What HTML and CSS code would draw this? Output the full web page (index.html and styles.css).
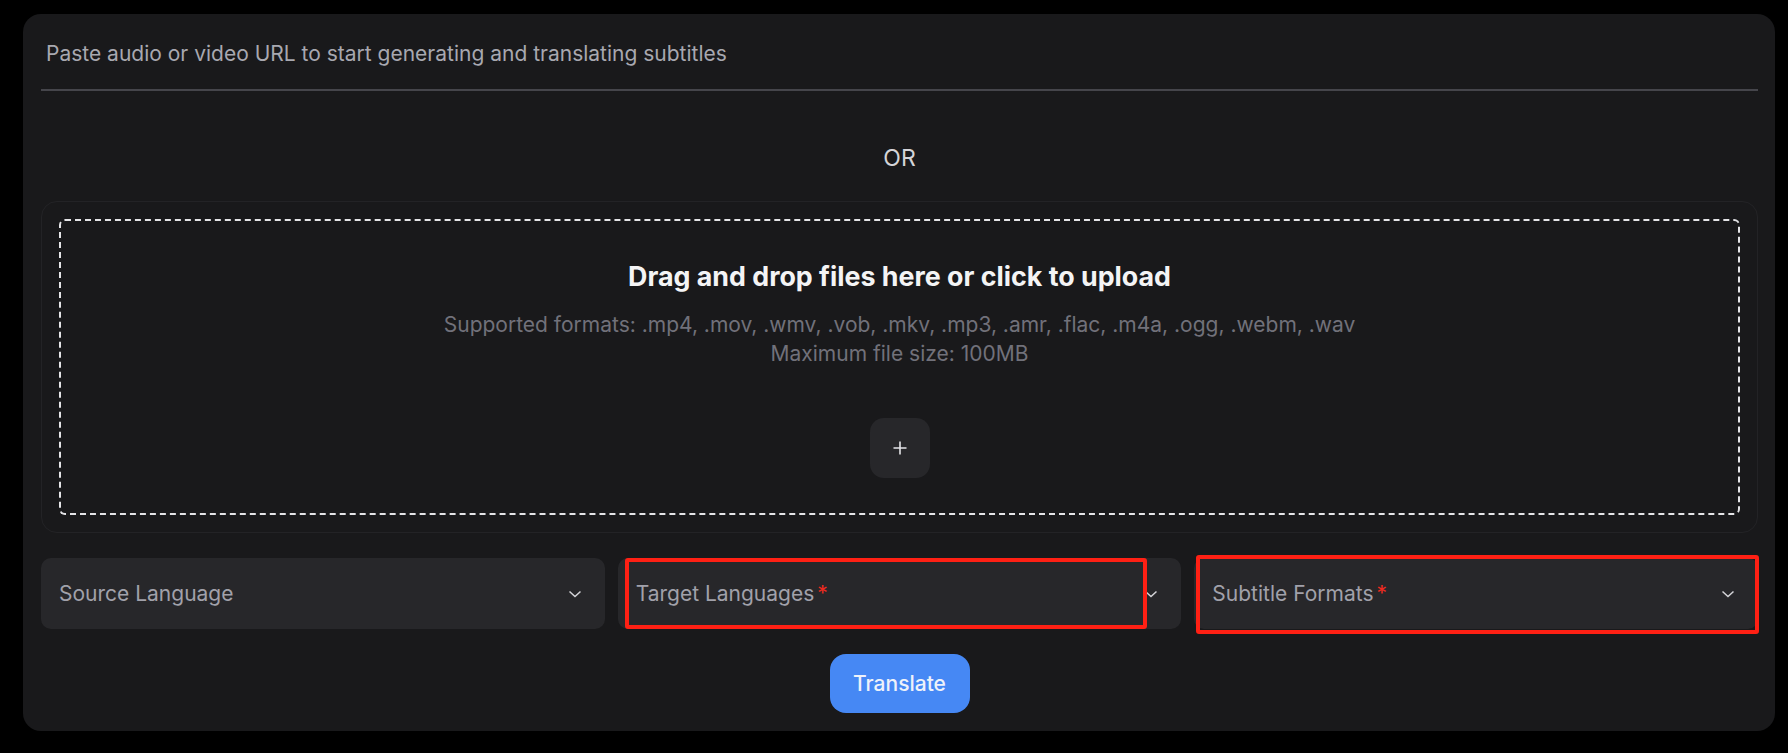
FILE: index.html
```html
<!DOCTYPE html>
<html lang="en">
<head>
<meta charset="utf-8">
<title>Subtitles</title>
<link rel="stylesheet" href="styles.css">
</head>
<body>
<main class="card">
  <div class="url-input">Paste audio or video URL to start generating and translating subtitles</div>
  <div class="or">OR</div>
  <section class="upload">
    <div class="dropzone">
      <h2 class="drop-title">Drag and drop files here or click to upload</h2>
      <p class="drop-note">Supported formats: .mp4, .mov, .wmv, .vob, .mkv, .mp3, .amr, .flac, .m4a, .ogg, .webm, .wav</p>
      <p class="drop-note">Maximum file size: 100MB</p>
      <div class="plus-btn">
        <svg width="16" height="16" viewBox="0 0 16 16"><path d="M8 1.5v13M1.5 8h13" stroke="#e4e4e7" stroke-width="1.6" fill="none"/></svg>
      </div>
    </div>
  </section>
  <div class="selects">
    <div class="select">
      <span class="label">Source Language</span>
      <svg class="chev" width="14" height="8" viewBox="0 0 14 8"><path d="M1.5 1.5l5.5 5 5.5-5" stroke="#d4d4d8" stroke-width="1.5" fill="none"/></svg>
    </div>
    <div class="select">
      <span class="label">Target Languages<span class="req">*</span></span>
      <svg class="chev" width="14" height="8" viewBox="0 0 14 8"><path d="M1.5 1.5l5.5 5 5.5-5" stroke="#d4d4d8" stroke-width="1.5" fill="none"/></svg>
      <div class="mark mark-target"></div>
    </div>
    <div class="select">
      <span class="label">Subtitle Formats<span class="req">*</span></span>
      <svg class="chev" width="14" height="8" viewBox="0 0 14 8"><path d="M1.5 1.5l5.5 5 5.5-5" stroke="#d4d4d8" stroke-width="1.5" fill="none"/></svg>
      <div class="mark mark-formats"></div>
    </div>
  </div>
  <div class="actions">
    <button class="translate">Translate</button>
  </div>
</main>
</body>
</html>
```
FILE: styles.css
```css
* { box-sizing: border-box; }
html, body { margin: 0; padding: 0; background: #000; }
body {
  font-family: Inter, "Noto Sans", sans-serif;
  padding: 14px 13px 22px 23px;
}
.card {
  background: #19191b;
  border-radius: 18px;
  padding: 18px 17px 18px 18px;
  width: 1752px;
  height: 717px;
}
.url-input {
  height: 59px;
  padding: 8px 5px 0 5px;
  line-height: 27px;
  font-size: 21px;
  color: #a8a8b0;
  border-bottom: 2px solid #45454b;
}
.or {
  margin: 54px 0 29px;
  text-align: center;
  font-size: 23px;
  line-height: 27px;
  color: #d4d4d8;
}
.upload {
  border: 1px solid #232326;
  border-radius: 16px;
  padding: 17px;
  height: 332px;
}
.dropzone {
  border: 2px dashed #e4e4e7;
  border-radius: 6px;
  height: 296px;
  padding-top: 39px;
  display: flex;
  flex-direction: column;
  align-items: center;
}
.drop-title {
  margin: 0 0 18px;
  font-size: 26.8px;
  line-height: 32px;
  font-weight: 700;
  color: #f4f4f5;
}
.drop-note {
  margin: 0;
  font-size: 21px;
  line-height: 29px;
  color: #71717a;
}
.plus-btn {
  margin-top: 50px;
  width: 60px;
  height: 60px;
  border-radius: 14px;
  background: #27272a;
  display: flex;
  align-items: center;
  justify-content: center;
}
.selects {
  margin-top: 25px;
  display: grid;
  grid-template-columns: 1fr 1fr 1fr;
  gap: 13px;
}
.select {
  position: relative;
  height: 71px;
  background: #27272a;
  border-radius: 10px;
  display: flex;
  align-items: center;
  justify-content: space-between;
  padding: 0 23px 0 18px;
}
.label {
  font-size: 21px;
  color: #a1a1aa;
}
.req {
  color: #ef2a1f;
  margin-left: 3px;
}
.chev { display: block; }
.mark {
  position: absolute;
  border: 4px solid #ff2014;
  border-radius: 3px;
}
.mark-target { left: 7px; right: 34px; top: 0; bottom: 0; }
.mark-formats { left: 2px; right: -1px; top: -3px; bottom: -5px; }
.actions {
  margin-top: 25px;
  display: flex;
  justify-content: center;
}
.translate {
  width: 140px;
  height: 59px;
  border: none;
  border-radius: 16px;
  background: #4688f4;
  color: #eef2fa;
  font-family: Inter, "Noto Sans", sans-serif;
  font-size: 21px;
  font-weight: 500;
}
```
